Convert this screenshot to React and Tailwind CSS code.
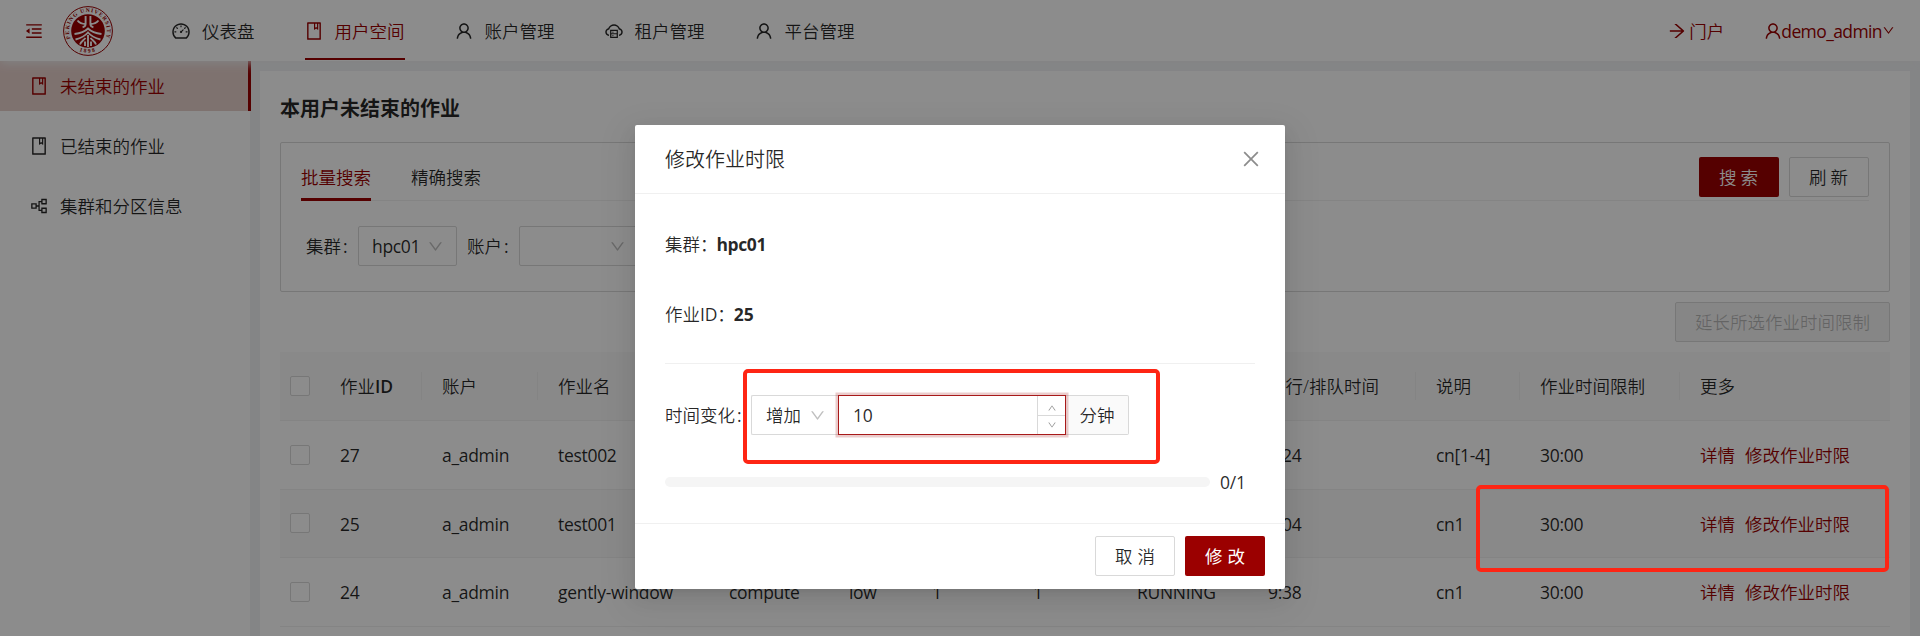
import {
  AiOutlineMenuFold, AiOutlineDashboard, AiOutlineBook, AiOutlineUser, AiOutlineCloudServer,
  AiOutlineArrowRight, AiOutlineDown, AiOutlineUp, AiOutlineClose, AiOutlinePartition,
} from "react-icons/ai";

const navItems = [
  { icon: AiOutlineDashboard, label: "仪表盘" },
  { icon: AiOutlineBook, label: "用户空间", active: true },
  { icon: AiOutlineUser, label: "账户管理" },
  { icon: AiOutlineCloudServer, label: "租户管理" },
  { icon: AiOutlineUser, label: "平台管理" },
];

const sideItems = [
  { icon: AiOutlineBook, label: "未结束的作业", active: true },
  { icon: AiOutlineBook, label: "已结束的作业" },
  { icon: AiOutlinePartition, label: "集群和分区信息" },
];

const columns = ["作业ID", "账户", "作业名", "分区", "QOS", "节点数", "核心数", "状态", "运行/排队时间", "说明", "作业时间限制", "更多"];

const rows = [
  ["27", "a_admin", "test002", "compute", "low", "1", "1", "RUNNING", "0:24", "cn[1-4]", "30:00"],
  ["25", "a_admin", "test001", "compute", "low", "1", "1", "RUNNING", "5:04", "cn1", "30:00"],
  ["24", "a_admin", "gently-window", "compute", "low", "1", "1", "RUNNING", "9:38", "cn1", "30:00"],
];

const grid = "grid grid-cols-[40px_102px_116px_171px_120px_83px_101px_104px_131px_168px_104px_160px_210px] items-center";

function Logo() {
  return (
    <svg viewBox="0 0 50 50" className="size-[50px] shrink-0">
      <defs>
        <path id="ring-top" d="M7.6 32.5 A19 19 0 1 1 42.4 32.5" />
        <path id="ring-bottom" d="M10 41 A22.8 22.8 0 0 0 40 41" />
      </defs>
      <circle cx="25" cy="25" r="24.4" fill="#fff" stroke="#9b0000" strokeWidth="1" />
      <circle cx="25" cy="25" r="16.8" fill="#9b0000" />
      <g fill="#9b0000" fontSize="5.6" fontWeight="600" fontFamily="Liberation Serif, serif">
        <text><textPath href="#ring-top" textLength="74">PEKING UNIVERSITY</textPath></text>
        <text><textPath href="#ring-bottom" startOffset="50%" textAnchor="middle" letterSpacing="1.6">1898</textPath></text>
      </g>
      <g fill="none" stroke="#fff" strokeWidth="1.9">
        <path d="M22.6 10v8c0 2-1 2.800-3 3.200M27.400 10v8c0 2 1 2.800 3 3.200" />
        <path d="M14.500 14.500c2 2.500 4.500 3.500 8 3.500M35.500 14.500c-2 2.500-4.500 3.500-8 3.500" />
        <path d="M11.500 28C16 27.500 21.500 26 25 22.500c3.500 3.500 9 5 13.500 5.500" />
        <path d="M12.500 33.500C18 32 22 30 25 26.500c3 3.500 7 5.500 12.500 7" />
        <path d="M17 38.500c1-3 3.500-4 5.500-6.500M33 38.500c-1-3-3.500-4-5.500-6.500" />
        <path d="M22 40v-4.500M28 40v-4.500M25 29v12" />
      </g>
    </svg>
  );
}

function Checkbox() {
  return <span className="ml-[10px] block size-5 rounded-[2px] border border-[#d9d9d9] bg-white" />;
}

function Header() {
  return (
    <header className="relative z-10 flex h-[61px] items-center bg-white shadow-[0_2px_10px_#f0f1f2]">
      <AiOutlineMenuFold className="ml-6 size-5 text-[#9b0000]" />
      <div className="ml-[19px]"><Logo /></div>
      <nav className="ml-[59px] flex h-full gap-[50px]">
        {navItems.map(({ icon: Icon, label, active }) => (
          <div key={label} className={active ? "relative flex h-full items-center text-[#9b0000]" : "relative flex h-full items-center"}>
            <span className="w-[30px]"><Icon className="-ml-px size-5" /></span>
            <span className="pt-[2px]">{label}</span>
            {active && <span className="absolute bottom-[1px] left-0 h-[2px] w-full bg-[#9b0000]" />}
          </div>
        ))}
      </nav>
      <div className="ml-auto flex items-center pr-[25px] text-[#9b0000]">
        <AiOutlineArrowRight className="size-5" />
        <span className="ml-[2px] pt-[2px]">门户</span>
        <AiOutlineUser className="ml-[39px] size-5" />
        <span className="-ml-[2px] pt-[2px] font-normal tracking-[-0.6px]">demo_admin</span>
        <AiOutlineDown className="size-[13px]" />
      </div>
    </header>
  );
}

function Sidebar() {
  return (
    <aside className="flex w-[250px] shrink-0 flex-col gap-[10px] bg-white">
      {sideItems.map(({ icon: Icon, label, active }) => (
        <div
          key={label}
          className={
            active
              ? "-mr-px flex h-[50px] items-center border-r-[3px] border-[#9b0000] bg-[#e6cfcb] pl-[30px] text-[#9b0000]"
              : "flex h-[50px] items-center pl-[30px]"
          }
        >
          <span className="w-[30px]"><Icon className="-ml-px size-5" /></span>
          <span className="pt-[2px]">{label}</span>
        </div>
      ))}
    </aside>
  );
}

function SearchPanel() {
  return (
    <section className="mt-[19px] h-[150px] rounded-[2px] border border-[#d9d9d9] px-5 pt-[14px]">
      <div className="flex h-[44px] border-b border-[#f0f0f0]">
        <div className="relative flex h-[44px] items-center pb-[2px] text-[#9b0000]">
          批量搜索
          <span className="absolute bottom-0 left-0 h-[3px] w-full bg-[#9b0000]" />
        </div>
        <div className="ml-10 flex h-[44px] items-center pb-[2px]">精确搜索</div>
        <div className="ml-auto flex gap-[10px]">
          <button className="h-10 w-20 rounded-[2px] bg-[#9b0000] pt-px tracking-[4px] text-white indent-[3px]">搜索</button>
          <button className="h-10 w-20 rounded-[2px] border border-[#d9d9d9] bg-white pt-px tracking-[4px] indent-[3px]">刷新</button>
        </div>
      </div>
      <div className="mt-[25px] flex items-center pl-[5px]">
        <span className="w-[52px] pt-px">集群<span className="ml-[2px] font-normal">:</span></span>
        <div className="flex h-10 w-[99px] items-center justify-between rounded-[2px] border border-[#d9d9d9] pl-[13px] pr-[12px]">
          <span className="pt-px font-normal tracking-[-0.35px]">hpc01</span>
          <AiOutlineDown className="size-[17px] text-black/25" />
        </div>
        <span className="ml-[10px] w-[52px] pt-px">账户<span className="ml-[2px] font-normal">:</span></span>
        <div className="flex h-10 w-[120px] items-center justify-end rounded-[2px] border border-[#d9d9d9] pr-[12px]">
          <AiOutlineDown className="size-[17px] text-black/25" />
        </div>
      </div>
    </section>
  );
}

function JobTable() {
  return (
    <div className="mt-[10px]">
      <div className={grid + " h-[69px] border-b border-[#f0f0f0] bg-[#fafafa]"}>
        <Checkbox />
        {columns.map((name, i) => (
          <div key={name} className={i < 11 ? "flex h-7 items-center border-r border-[#f0f0f0] pt-[2px] pl-5 whitespace-nowrap" : "pt-[2px] pl-5"}>
            {i === 0 ? <span>作业<b className="font-semibold">ID</b></span> : <span>{name}</span>}
          </div>
        ))}
      </div>
      {rows.map((cells, r) => (
        <div
          key={cells[0]}
          className={grid + (r === 1 ? " h-[68.67px] border-b border-[#f0f0f0] bg-[#fafafa]" : " h-[68.67px] border-b border-[#f0f0f0]")}
        >
          <Checkbox />
          {cells.map((cell, i) => (
            <div key={i} className="pt-[2px] pl-5 font-normal tracking-[-0.3px] whitespace-nowrap">{cell}</div>
          ))}
          <div className="flex gap-[10px] pt-[2px] pl-5 whitespace-nowrap text-[#9b0000]">
            <a>详情</a>
            <a>修改作业时限</a>
          </div>
        </div>
      ))}
      <div className="h-3" />
    </div>
  );
}

function TimeLimitModal() {
  return (
    <div className="absolute top-[125px] left-[635px] flex h-[464px] w-[650px] flex-col rounded-[2px] bg-white shadow-[0_4px_8px_-5px_rgba(0,0,0,0.12),0_8px_20px_rgba(0,0,0,0.08),0_11px_35px_10px_rgba(0,0,0,0.05)]">
      <div className="flex h-[69px] shrink-0 items-center justify-between border-b border-[#f0f0f0] pr-[23px] pl-[30px] text-[20px]">
        <span className="pt-[2px]">修改作业时限</span>
        <AiOutlineClose className="size-[22px] text-black/45" />
      </div>
      <div className="flex h-[329px] flex-col px-[30px] pt-[36px]">
        <p className="h-[28px] leading-[28px]">集群：<b className="-ml-px font-bold tracking-[-0.4px]">hpc01</b></p>
        <p className="mt-[42px] h-[28px] leading-[28px]">作业<span className="font-normal tracking-[-0.2px]">ID</span>：<b className="-ml-px font-bold">25</b></p>
        <div className="mt-[35px] border-t border-[#f0f0f0]" />
        <div className="mt-[31px] flex h-10 items-center">
          <span className="w-[86px] pt-px whitespace-nowrap">时间变化<span className="ml-[2px] font-normal">:</span></span>
          <div className="flex h-10 w-[87px] items-center justify-between rounded-l-[2px] border border-r-0 border-[#d9d9d9] pr-[12px] pl-[14px]">
            <span className="pt-px">增加</span>
            <AiOutlineDown className="size-[17px] text-black/25" />
          </div>
          <div className="z-10 flex h-10 w-[228px] items-center border border-[#a81a1a] pl-[14px] shadow-[0_0_0_2.5px_rgba(155,0,0,0.2)]">
            <span className="pt-[2px] font-normal tracking-[-0.3px]">10</span>
            <div className="ml-auto flex h-full w-7 flex-col border-l border-[#d9d9d9] text-black/45">
              <span className="flex h-[20px] items-center justify-center border-b border-[#d9d9d9]"><AiOutlineUp className="mt-1 size-[10px]" /></span>
              <span className="flex h-[18px] items-center justify-center"><AiOutlineDown className="size-[10px]" /></span>
            </div>
          </div>
          <div className="flex h-10 w-[63px] items-center justify-center rounded-r-[2px] border border-l-0 border-[#d9d9d9] bg-[#fafafa] pt-px">分钟</div>
        </div>
        <div className="mt-[33px] flex h-[28px] items-center">
          <span className="h-[10px] w-[545px] rounded-full bg-[#f5f5f5]" />
          <span className="ml-[10px] pt-[2px] font-normal tracking-[-0.2px]">0/1</span>
        </div>
      </div>
      <div className="flex h-[66px] shrink-0 items-start justify-end gap-[10px] border-t border-[#f0f0f0] pt-3 pr-5">
        <button className="h-10 w-20 rounded-[2px] border border-[#d9d9d9] bg-white pt-[2px] tracking-[5px] indent-[5px]">取消</button>
        <button className="h-10 w-20 rounded-[2px] bg-[#9b0000] pt-[2px] font-normal tracking-[5px] text-white indent-[5px]">修改</button>
      </div>
    </div>
  );
}

export default function App() {
  return (
    <div className="relative flex h-[636px] w-[1920px] flex-col overflow-hidden bg-[#f0f2f5] font-['Open_Sans','Noto_Sans_CJK_SC',sans-serif] text-[17.5px] leading-[27.5px] font-[350] text-black/85">
      <Header />
      <div className="flex flex-1 overflow-hidden">
        <Sidebar />
        <main className="mt-[10px] mr-[10px] ml-[10px] flex-1 bg-white px-5 pt-[22px]">
          <h1 className="h-[30px] text-[20px] leading-[32px] font-bold">本用户未结束的作业</h1>
          <SearchPanel />
          <div className="mt-[10px] flex justify-end">
            <button className="h-10 w-[215px] rounded-[2px] border border-[#d9d9d9] bg-[#f5f5f5] pt-px text-black/25">延长所选作业时间限制</button>
          </div>
          <JobTable />
        </main>
      </div>
      <div className="absolute inset-0 z-20 bg-black/45" />
      <div className="absolute inset-0 z-30">
        <TimeLimitModal />
        <div className="absolute top-[369px] left-[743px] z-10 h-[95px] w-[417px] rounded-[5px] border-4 border-[#fe2514]" />
        <div className="absolute top-[485px] left-[1476px] h-[87px] w-[413px] rounded-[5px] border-4 border-[#fe2514]" />
      </div>
    </div>
  );
}
